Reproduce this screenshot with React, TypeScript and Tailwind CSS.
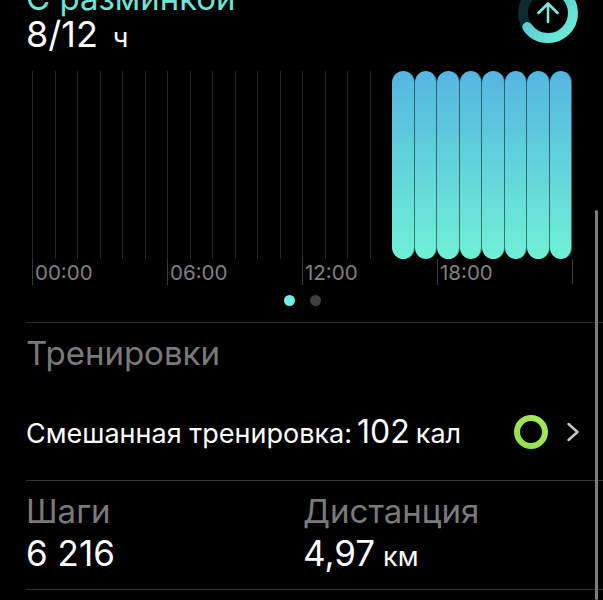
const cells = Array.from({ length: 24 }, (_, i) => i);
const labels = ["00:00", "06:00", "12:00", "18:00"];

function GoalRing() {
  const r = 25;
  const c = 2 * Math.PI * r;
  return (
    <svg width="64" height="64" viewBox="0 0 64 64" className="shrink-0">
      <defs>
        <linearGradient id="ringTop" x1="1" y1="0" x2="0" y2="1">
          <stop offset="0" stopColor="#52b6d4" />
          <stop offset="1" stopColor="#6cf0d6" />
        </linearGradient>
      </defs>
      <circle cx="32" cy="32" r={r} fill="none" stroke="#0f2a30" strokeWidth="10" />
      <circle
        cx="32"
        cy="32"
        r={r}
        fill="none"
        stroke="url(#ringTop)"
        strokeWidth="10"
        strokeLinecap="round"
        strokeDasharray={`${c * 0.65} ${c}`}
        transform="rotate(-90 32 32)"
      />
      <path d="M32 41V23M22.5 32L32 22.5L41.5 32" fill="none" stroke="#7fe6e0" strokeWidth="2.6" strokeLinecap="round" strokeLinejoin="round" />
    </svg>
  );
}

function MoveRing() {
  return (
    <svg width="36" height="36" viewBox="0 0 36 36" className="shrink-0">
      <defs>
        <linearGradient id="ringMove" x1="0" y1="1" x2="1" y2="0">
          <stop offset="0" stopColor="#8fe04a" />
          <stop offset="1" stopColor="#a9e85a" />
        </linearGradient>
      </defs>
      <circle cx="18" cy="18" r="14" fill="none" stroke="url(#ringMove)" strokeWidth="6" />
    </svg>
  );
}

export default function App() {
  return (
    <div
      className="relative h-[600px] w-[603px] overflow-hidden bg-black text-white"
      style={{ fontFamily: '"Inter", "Noto Sans", sans-serif' }}
    >
      <div className="flex items-start justify-between pl-[26px] pr-[23px]">
        <div className="-mt-[21px]">
          <div className="text-[33px] leading-[38px] text-[#6fe3d6]">С разминкой</div>
          <div className="flex items-baseline text-[36px] leading-[35px]">
            8/12<span className="ml-[15px] text-[27px]">ч</span>
          </div>
        </div>
        <div className="-mt-[19px]">
          <GoalRing />
        </div>
      </div>

      <div className="ml-[32px] mt-[16px] w-[541px]">
        <div className="grid h-[188px] w-[540px] grid-cols-[repeat(24,22.5px)]">
          {cells.map((i) =>
            i >= 16 ? (
              <div key={i} className="rounded-full border-r border-black/50 bg-gradient-to-b from-[#55b6e0] to-[#6ff0d5]" />
            ) : (
              <div key={i} className="border-l border-[#262626]" />
            )
          )}
        </div>
        <div className="grid h-[25px] grid-cols-[repeat(4,135px)] border-r border-[#3a3a3a]">
          {labels.map((l) => (
            <div key={l} className="border-l border-[#3a3a3a] pl-[2px] pt-[2px] text-[20.5px] leading-[24px] text-[#808080]">
              {l}
            </div>
          ))}
        </div>
      </div>

      <div className="mt-[11px] flex justify-center gap-[15px] pl-[1px]">
        <div className="h-[11px] w-[11px] rounded-full bg-[#6eeee8]" />
        <div className="h-[11px] w-[11px] rounded-full bg-[#404040]" />
      </div>

      <div className="ml-[26px] mt-[16px] border-t border-[#2a2a2a] pt-[9px]">
        <div className="text-[33px] leading-[42px] text-[#7a7a7a]">Тренировки</div>
      </div>

      <div className="ml-[26px] mt-[36px] flex h-[44px] items-center">
        <div className="flex w-[487px] items-baseline text-[27px]">
          Смешанная тренировка:
          <span className="ml-[5px] text-[32px]">102</span>
          <span className="ml-[6px]">кал</span>
        </div>
        <MoveRing />
        <svg width="16" height="24" viewBox="0 0 16 24" className="ml-[16px] shrink-0">
          <path d="M3.5 4L12.5 12L3.5 20" fill="none" stroke="#c8c8c8" strokeWidth="2.4" strokeLinecap="round" strokeLinejoin="round" />
        </svg>
      </div>

      <div className="ml-[26px] mt-[26px] border-t border-[#333333] pb-[11px] pt-[9px]">
        <div className="grid grid-cols-[277px_1fr]">
          <div>
            <div className="text-[33px] leading-[42px] text-[#7a7a7a]">Шаги</div>
            <div className="text-[35px] leading-[42px]">6 216</div>
          </div>
          <div>
            <div className="text-[33px] leading-[42px] text-[#7a7a7a]">Дистанция</div>
            <div className="flex items-baseline text-[35px] leading-[42px]">
              4,97<span className="ml-[8px] text-[27px]">км</span>
            </div>
          </div>
        </div>
      </div>
      <div className="ml-[26px] border-t border-[#333333]" />

      <div className="absolute right-[5px] top-[210px] h-[390px] w-[3px] rounded-full bg-[#7d7d7d]" />
    </div>
  );
}
